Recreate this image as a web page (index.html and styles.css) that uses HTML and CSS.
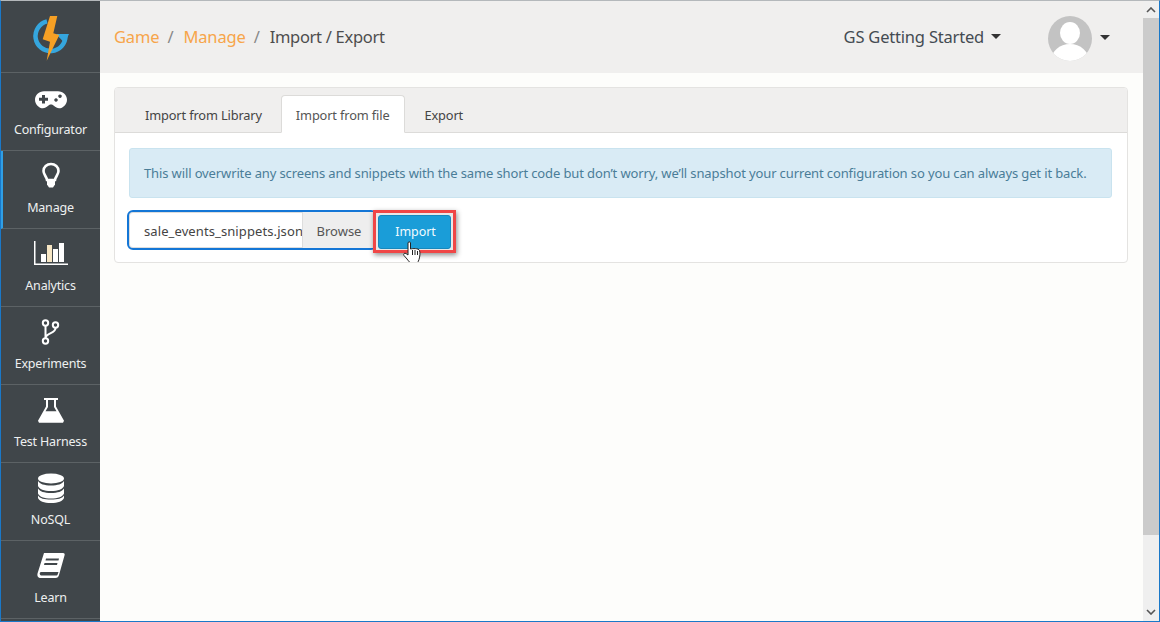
FILE: index.html
```html
<!DOCTYPE html>
<html lang="en">
<head>
<meta charset="utf-8">
<title>Import / Export</title>
<link rel="stylesheet" href="styles.css">
</head>
<body>
<div class="window">
  <aside class="sidebar">
    <div class="logo">
      <svg width="38" height="46" viewBox="0 0 38 46">
        <path d="M15 6.400 A15 15 0 1 0 33.500 21" fill="none" stroke="#35a6de" stroke-width="4.500"/>
        <path d="M24 19 L37 19 L32.500 28 Z" fill="#35a6de"/>
        <path d="M18 1 L25.300 1 L21.300 18.300 L27.300 20 L14.700 45.700 L18 26.700 L10.700 24.300 Z" fill="#f6a024"/>
      </svg>
    </div>
    <a class="nav-item">
      <svg class="nav-icon" width="32" height="30" viewBox="0 0 32 30"><path transform="translate(0 6.200) scale(1 .95)" fill-rule="evenodd" fill="#fff" d="M9 1h14c5 0 9 4 9 9s-4 9-8 9c-3 0-5-3-7-4h-2c-2 1-4 4-7 4-4 0-8-4-8-9s4-9 9-9zM7 5v3H4v3h3v3h3v-3h3V8h-3V5zM25 4.500a1.800 1.800 0 1 0 .01 0zM21 8.500a1.800 1.800 0 1 0 .01 0z"/></svg>
      <span>Configurator</span>
    </a>
    <a class="nav-item active">
      <svg class="nav-icon" width="18" height="30" viewBox="0 0 18 30"><g transform="translate(0 .5)"><path fill="none" stroke="#fff" stroke-width="2.600" d="M9 1.500c-4.200 0-7.500 3-7.500 7 0 3.500 3 5.500 3.500 9h8c.5-3.500 3.500-5.500 3.500-9 0-4-3.300-7-7.500-7z"/><path fill="#fff" d="M5 18h8v4l-2 3H7l-2-3z"/></g></svg>
      <span>Manage</span>
    </a>
    <a class="nav-item">
      <svg class="nav-icon" width="34" height="30" viewBox="0 0 34 30"><g transform="translate(0 1)"><path fill="#fff" d="M0 0h1.500v22.500H34V24H0z"/><path fill="#fff" d="M7 13h5v8H7z"/><path fill="#f6e6c4" d="M13 4h5v17h-5z"/><path fill="#fff" d="M19 8h5v13h-5zM25 2h5v19h-5z"/></g></svg>
      <span>Analytics</span>
    </a>
    <a class="nav-item">
      <svg class="nav-icon" width="20" height="30" viewBox="0 0 20 30"><g fill="none" stroke="#fff" stroke-width="2"><circle cx="4.500" cy="5" r="2.700"/><circle cx="14.500" cy="7" r="2.700"/><circle cx="4.500" cy="23" r="2.700"/><path d="M4.500 8v12M14.500 10c0 6-9 4-10 10"/></g></svg>
      <span>Experiments</span>
    </a>
    <a class="nav-item">
      <svg class="nav-icon" width="26" height="30" viewBox="0 0 26 30"><path transform="translate(0 2) scale(1 .95)" fill="#fff" d="M6 0h14v2h-2v7l8 15-1 2H1L0 24 8 9V2H6zM10 2v7.500L7.500 14h11L16 9.500V2z" fill-rule="evenodd"/></svg>
      <span>Test Harness</span>
    </a>
    <a class="nav-item">
      <svg class="nav-icon" width="26" height="30" viewBox="0 0 26 30"><g fill="#fff" transform="translate(0 -1)"><ellipse cx="13" cy="5.500" rx="13" ry="5"/><path d="M0 8c2 3 6 4.500 13 4.500S24 11 26 8v5c-1 3-6 5-13 5S1 16 0 13z"/><path d="M0 15.500c2 3 6 4.500 13 4.500s11-1.500 13-4.500v5c-1 3-6 5-13 5s-12-2-13-5z"/><path d="M0 22.500c2 3 6 4 13 4s11-1 13-4v2.500c-1 3-6 5-13 5s-12-2-13-5z"/></g></svg>
      <span>NoSQL</span>
    </a>
    <a class="nav-item">
      <svg class="nav-icon" width="28" height="30" viewBox="0 0 28 30"><path transform="translate(0 1)" fill="#fff" fill-rule="evenodd" d="M7 0h19c1.500 0 2 1 1.500 2.500L22 22c-.5 2-1.500 3-3.500 3H4c-3 0-4-2-3.500-4.500zM9 5.500 8.500 7.500h13l.5-2zM7.500 10l-.5 2h13l.5-2zM4 19c-1 0-1.500 1-1.200 2s1 1.500 2.200 1.500h14c1 0 1.500-.5 1.800-1.500l.7-2z"/></svg>
      <span>Learn</span>
    </a>
  </aside>
  <div class="main">
    <header class="topbar">
      <nav class="crumbs">
        <a class="crumb-link">Game</a><span class="sep">/</span>
        <a class="crumb-link">Manage</a><span class="sep">/</span>
        <span class="crumb-current">Import / Export</span>
      </nav>
      <div class="game-select">GS Getting Started<i class="caret"></i></div>
      <div class="user">
        <svg class="avatar" width="44" height="45" viewBox="0 0 44 45"><defs><clipPath id="av"><ellipse cx="22" cy="22.500" rx="22" ry="22.500"/></clipPath></defs><g clip-path="url(#av)"><rect width="44" height="45" fill="#c3c3c3"/><ellipse cx="22" cy="17" rx="10" ry="11" fill="#fff"/><ellipse cx="22" cy="45" rx="19" ry="17" fill="#fff"/></g></svg>
        <i class="caret caret-user"></i>
      </div>
    </header>
    <main class="content">
      <section class="panel">
        <div class="tabs">
          <a class="tab">Import from Library</a>
          <a class="tab tab-active">Import from file</a>
          <a class="tab">Export</a>
        </div>
        <div class="panel-body">
          <div class="alert">This will overwrite any screens and snippets with the same short code but don’t worry, we’ll snapshot your current configuration so you can always get it back.</div>
          <div class="form-row">
            <div class="file-input">
              <span class="file-name">sale_events_snippets.json</span>
              <span class="browse">Browse</span>
            </div>
            <div class="highlight">
              <button class="import-btn">Import</button>
              <svg class="cursor" width="20" height="25" viewBox="0 0 20 25"><path fill="#fff" stroke="#222" stroke-width="1" d="M5 2c0-1.500 2.500-1.500 2.500 0v6c2-.5 8-1 9 1.500.8 2 .5 6-.5 9-.7 2.500-2 4.500-5 4.500-3.500 0-5-2.500-7-5l-3-3.500c-1-1.500.5-3 2-2l2 1.500z"/><path stroke="#222" stroke-width="1" d="M9.500 9v5M12 9v5M14.500 10v4"/></svg>
            </div>
          </div>
        </div>
      </section>
    </main>
  </div>
  <div class="scrollbar">
    <svg class="arrow arrow-up" width="10" height="6" viewBox="0 0 10 6"><path d="M1 5l4-4 4 4" fill="none" stroke="#555" stroke-width="1.600"/></svg>
    <div class="thumb"></div>
    <svg class="arrow" width="10" height="6" viewBox="0 0 10 6"><path d="M1 1l4 4 4-4" fill="none" stroke="#555" stroke-width="1.600"/></svg>
  </div>
</div>
</body>
</html>
```
FILE: styles.css
```css
* { box-sizing: border-box; }
html, body { margin: 0; height: 100%; overflow: hidden; }
body { font-family: "Noto Sans", "Open Sans", sans-serif; color: #444; }

.window {
  width: 1160px;
  height: 622px;
  display: flex;
  border-top: 1px solid #b4b8bb;
  border-left: 1px solid #1a78c8;
  border-right: 1px solid #1a78c8;
  border-bottom: 1px solid #1a78c8;
  background: #fdfdfb;
}

.sidebar {
  width: 99px;
  flex: none;
  background: #40464a;
  display: flex;
  flex-direction: column;
  overflow: hidden;
}
.logo {
  height: 72px;
  flex: none;
  display: flex;
  align-items: center;
  justify-content: center;
  border-bottom: 1px solid #5c6265;
  padding-top: 3px;
}
.nav-item {
  height: 78px;
  flex: none;
  display: flex;
  flex-direction: column;
  align-items: center;
  color: #eef0f0;
  font-size: 12.500px;
  letter-spacing: -0.18px;
  border-bottom: 1px solid #5c6265;
  position: relative;
}
.nav-item.active { border-left: 2px solid #2f9fe6; padding-right: 2px; }
.nav-icon { margin-top: 11px; margin-bottom: 7px; flex: none; overflow: visible; }
.nav-item span { line-height: 18px; }

.main { flex: 1; min-width: 0; display: flex; flex-direction: column; }

.topbar {
  height: 72px;
  flex: none;
  background: #f0efee;
  display: flex;
  align-items: center;
  padding-left: 14px;
  padding-bottom: 2px;
}
.crumbs { display: flex; align-items: center; font-size: 16.500px; letter-spacing: -0.15px; flex: 1; }
.crumb-link { color: #f7a54a; }
.crumb-current { color: #4d4d4d; letter-spacing: -0.3px; }
.sep { color: #888; margin: 0 10px 0 8px; }
.game-select { font-size: 16.500px; letter-spacing: -0.2px; color: #444b52; display: flex; align-items: center; }
.caret {
  display: inline-block;
  width: 0;
  height: 0;
  border-left: 5px solid transparent;
  border-right: 5px solid transparent;
  border-top: 5px solid #333;
  margin-left: 7px;
}
.caret-user { margin-left: 8px; margin-bottom: 2px; }
.user { display: flex; align-items: center; margin-left: 47px; margin-right: 33px; margin-top: 4px; }
.avatar { display: block; }

.content { flex: 1; padding: 14px 15px 0 14px; }
.panel {
  height: 176px;
  border: 1px solid #e4e3e1;
  border-radius: 4px;
  background: #fff;
  overflow: hidden;
}
.tabs {
  height: 45px;
  background: #f0efee;
  border-bottom: 1px solid #dcdbd9;
  display: flex;
  align-items: flex-end;
  padding-left: 15px;
  font-size: 12.800px;
  letter-spacing: -0.14px;
}
.tab { height: 37px; padding: 0 15px; line-height: 38px; color: #444; margin-right: 4px; margin-bottom: -1px; }
.tab-active {
  height: 38px;
  padding: 0 15px 0 14px;
  background: #fff;
  border: 1px solid #dcdbd9;
  border-bottom-color: #fff;
  border-radius: 4px 4px 0 0;
  color: #555;
}
.panel-body { padding: 15px 15px 0 14px; }
.alert {
  height: 50px;
  background: #d9ebf5;
  border: 1px solid #c9e3ef;
  border-radius: 3px;
  color: #4a7d98;
  font-size: 13px;
  letter-spacing: -0.125px;
  line-height: 48px;
  padding-left: 14px;
  white-space: nowrap;
  overflow: hidden;
}
.form-row { display: flex; align-items: flex-start; margin-top: 12px; margin-left: -2px; }
.file-input {
  width: 250px;
  height: 40px;
  flex: none;
  border: 2px solid #1476d6;
  border-radius: 6px;
  display: flex;
  align-items: stretch;
  background: #fff;
  font-size: 13px;
  line-height: 39px;
  box-shadow: inset 0 0 0 1px #ddd;
}
.file-name { width: 173px; padding-left: 15px; color: #444; letter-spacing: 0.1px; white-space: nowrap; overflow: hidden; }
.browse { flex: 1; background: #eeeeee; color: #555; text-align: center; border-left: 1px solid #ddd; }
.highlight {
  position: relative;
  width: 83px;
  height: 43px;
  flex: none;
  margin-left: -4px;
  border: 3px solid #f04646;
  padding: 2px 2px 1px;
  box-shadow: 1px 2px 5px rgba(0,0,0,.45);
  background: #e8e8e8;
}
.import-btn {
  display: block;
  width: 100%;
  height: 100%;
  background: #1a9dd8;
  color: #f2fbff;
  border: 1px solid #1688bd;
  border-radius: 3px;
  font: inherit;
  font-size: 12.500px;
  letter-spacing: -0.1px;
  line-height: 30px;
  padding: 0 0 0 2px;
}
.cursor { position: absolute; left: 27px; top: 28px; }

.scrollbar {
  width: 16px;
  flex: none;
  background: #efefef;
  display: flex;
  flex-direction: column;
  align-items: center;
}
.arrow { flex: none; margin: 6px 0; }
.arrow-up { margin-bottom: 5px; }
.thumb { height: 517px; width: 100%; background: #cbcbcb; margin-bottom: auto; }
```
